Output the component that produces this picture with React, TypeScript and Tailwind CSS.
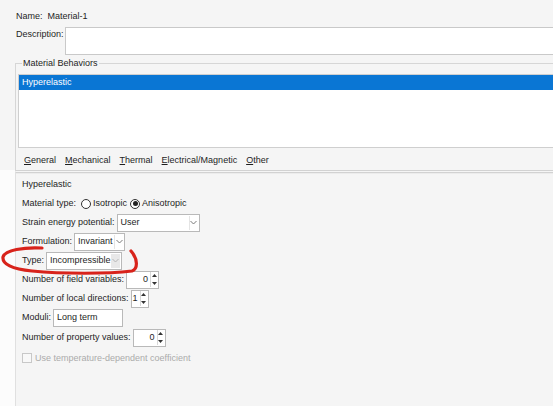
import React from "react";

const Chevron = ({ disabled }: { disabled?: boolean }) => (
  <svg width="7" height="5" viewBox="0 0 7 5">
    <path d="M0.5 1 L3.5 4 L6.5 1" fill="none" stroke={disabled ? "#b5b5b5" : "#7a7a7a"} strokeWidth="1" />
  </svg>
);

function Combo({ value, width, disabled }: { value: string; width: string; disabled?: boolean }) {
  return (
    <div className={`flex h-[18px] items-center border border-[#b9b9b9] bg-white ${width}`}>
      <div className="flex-1 overflow-hidden whitespace-nowrap pl-[3px]">{value}</div>
      <div
        className={`mr-[1px] flex h-[14px] w-[9px] shrink-0 items-center justify-center ${
          disabled ? "bg-[#e8e8e8]" : "border-l border-[#e4e4e4]"
        }`}
      >
        <Chevron disabled={disabled} />
      </div>
    </div>
  );
}

function Spin({ value, width }: { value: string; width: string }) {
  return (
    <div className={`flex h-[18px] items-center border border-[#b9b9b9] bg-white ${width}`}>
      <div className="flex-1 pr-[2px] text-right">{value}</div>
      <div className="mr-[1px] flex h-[15px] w-[7px] flex-col border-l border-[#d8d8d8]">
        <div className="flex flex-1 items-center justify-center">
          <svg width="5" height="3" viewBox="0 0 5 3">
            <path d="M0 3 L2.5 0 L5 3 Z" fill="#333" />
          </svg>
        </div>
        <div className="flex flex-1 items-center justify-center">
          <svg width="5" height="3" viewBox="0 0 5 3">
            <path d="M0 0 L2.5 3 L5 0 Z" fill="#333" />
          </svg>
        </div>
      </div>
    </div>
  );
}

const Radio = ({ checked }: { checked?: boolean }) => (
  <span className="flex h-[10px] w-[10px] items-center justify-center rounded-full border border-[#333] bg-white">
    {checked && <span className="h-[5px] w-[5px] rounded-full bg-[#222]" />}
  </span>
);

const U = ({ c }: { c: string }) => <span className="underline underline-offset-[1px]">{c}</span>;

export default function App() {
  return (
    <div
      className="relative h-[406px] w-[553px] overflow-hidden bg-[#f5f5f5] text-[9px] leading-[11px] text-[#1e1e1e]"
      style={{ fontFamily: '"Liberation Sans", Arial, sans-serif' }}
    >
      <div className="flex h-[27px] items-start pl-[16px] pt-[11px]">
        <span>Name:&nbsp; Material-1</span>
      </div>
      <div className="flex h-[28px] pl-[16px]">
        <div className="w-[49px] pt-[2px]">Description:</div>
        <div className="h-[28px] flex-1 border border-r-0 border-[#c9c9c9] bg-white" />
      </div>

      <div className="relative ml-[15px] mt-[8px] border-l border-t border-[#d6d6d6]">
        <div className="absolute left-[6px] top-[-6px] bg-[#f5f5f5] px-[1px] leading-[11px]">Material Behaviors</div>
        <div className="pl-[2px] pt-[10px]">
          <div className="h-[74px] border border-r-0 border-[#cfcfcf] bg-white">
            <div className="h-[15px] bg-[#0a76d4] pl-[3px] pt-[2px] text-white">Hyperelastic</div>
          </div>
        </div>
        <div className="flex h-[22px] items-center gap-[9px] pl-[8px] pt-[2px]">
          <span>
            <U c="G" />eneral
          </span>
          <span>
            <U c="M" />echanical
          </span>
          <span>
            <U c="T" />hermal
          </span>
          <span>
            <U c="E" />lectrical/Magnetic
          </span>
          <span>
            <U c="O" />ther
          </span>
        </div>
      </div>

      <div className="flex">
        <div className="w-[15px] bg-[#fcfcfc]" />
        <div className="h-[240px] flex-1 border-l border-t-[3px] border-double border-t-[#d2d2d2] border-l-[#e0e0e0] bg-[#f5f5f5]">
          <div className="border-b border-[#ececec]" />
          <div className="flex flex-col pl-[6px] pt-[1px]">
            <div className="flex h-[19px] items-center">Hyperelastic</div>
            <div className="flex h-[19px] items-center">
              <span>Material type:</span>
              <span className="ml-[5px]">
                <Radio />
              </span>
              <span className="ml-[2px]">Isotropic</span>
              <span className="ml-[3px]">
                <Radio checked />
              </span>
              <span className="ml-[2px]">Anisotropic</span>
            </div>
            <div className="flex h-[19px] items-center gap-[2px]">
              <span>Strain energy potential:</span>
              <Combo value="User" width="w-[83px]" />
            </div>
            <div className="flex h-[19px] items-center gap-[2px]">
              <span>Formulation:</span>
              <Combo value="Invariant" width="w-[51px]" />
            </div>
            <div className="flex h-[19px] items-center gap-[2px]">
              <span>Type:</span>
              <Combo value="Incompressible" width="w-[76px]" disabled />
            </div>
            <div className="flex h-[19px] items-center gap-[2px]">
              <span>Number of field variables:</span>
              <Spin value="0" width="w-[33px]" />
            </div>
            <div className="flex h-[19px] items-center gap-[2px]">
              <span>Number of local directions:</span>
              <Spin value="1" width="w-[18px]" />
            </div>
            <div className="flex h-[19px] items-center gap-[2px]">
              <span>Moduli:</span>
              <div className="flex h-[18px] w-[70px] items-center border border-[#b9b9b9] bg-white pl-[3px]">Long term</div>
            </div>
            <div className="mt-[1px] flex h-[19px] items-center gap-[2px]">
              <span>Number of property values:</span>
              <Spin value="0" width="w-[33px]" />
            </div>
            <div className="mt-[1px] flex h-[20px] items-center gap-[3px] text-[#ababab]">
              <span className="h-[10px] w-[10px] border border-[#c8c8c8] bg-[#f8f8f8]" />
              <span>Use temperature-dependent coefficient</span>
            </div>
          </div>
        </div>
      </div>

      <svg className="pointer-events-none absolute left-0 top-0" width="553" height="406" viewBox="0 0 553 406">
        <path
          d="M42 248 C24 247 5 250 3 257 C2 264 12 269 32 271 C62 274 108 274 132 271 C138 269 138 259 131 251"
          fill="none"
          stroke="#d8231b"
          strokeWidth="3.2"
          strokeLinecap="round"
        />
      </svg>
    </div>
  );
}
